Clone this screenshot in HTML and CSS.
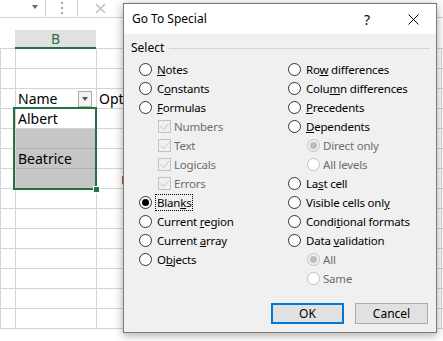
FILE: index.html
```html
<!DOCTYPE html>
<html lang="en">
<head>
    <meta charset="UTF-8">
    <title>Go To Special</title>
    <link rel="stylesheet" href="styles.css">
</head>
<body>
    <div class="page">
        <div class="sheet">
            <div class="formula-bar">
                <div class="name-box"><span class="tri"></span></div>
                <div class="grip"><i></i><i></i><i></i></div>
                <div class="fx-box">
                    <svg width="11" height="11" viewBox="0 0 11 11"><path d="M1 1L10 10M10 1L1 10" stroke="#c4c4c4" stroke-width="1.6"/></svg>
                </div>
            </div>
            <div class="spacer"></div>
            <div class="row heads">
                <div class="cell"></div>
                <div class="cell head-b">B</div>
                <div class="cell"></div>
                <div class="cell"></div>
            </div>
            <div class="row"><div class="cell"></div><div class="cell"></div><div class="cell"></div><div class="cell"></div></div>
            <div class="row"><div class="cell"></div><div class="cell"></div><div class="cell"></div><div class="cell"></div></div>
            <div class="row">
                <div class="cell"></div>
                <div class="cell name-cell">Name<span class="filter"><span class="tri"></span></span></div>
                <div class="cell">Opti</div>
                <div class="cell"></div>
            </div>
            <div class="row"><div class="cell"></div><div class="cell">Albert</div><div class="cell"></div><div class="cell"></div></div>
            <div class="row"><div class="cell"></div><div class="cell blank"></div><div class="cell"></div><div class="cell"></div></div>
            <div class="row"><div class="cell"></div><div class="cell blank">Beatrice</div><div class="cell"></div><div class="cell"></div></div>
            <div class="row"><div class="cell"></div><div class="cell blank"></div><div class="cell"><span class="mark"></span></div><div class="cell"></div></div>
            <div class="row"><div class="cell"></div><div class="cell"></div><div class="cell"></div><div class="cell"></div></div>
            <div class="row"><div class="cell"></div><div class="cell"></div><div class="cell"></div><div class="cell"></div></div>
            <div class="row"><div class="cell"></div><div class="cell"></div><div class="cell"></div><div class="cell"></div></div>
            <div class="row"><div class="cell"></div><div class="cell"></div><div class="cell"></div><div class="cell"></div></div>
            <div class="row"><div class="cell"></div><div class="cell"></div><div class="cell"></div><div class="cell"></div></div>
            <div class="row"><div class="cell"></div><div class="cell"></div><div class="cell"></div><div class="cell"></div></div>
            <div class="row"><div class="cell"></div><div class="cell"></div><div class="cell"></div><div class="cell"></div></div>
            <div class="selection"><span class="handle"></span></div>
        </div>

        <div class="dialog">
            <div class="title-bar">
                <span class="title">Go To Special</span>
                <span class="title-btn help">?</span>
                <span class="title-btn">
                    <svg width="11" height="11" viewBox="0 0 11 11"><path d="M0.5 0.5L10.5 10.5M10.5 0.5L0.5 10.5" stroke="#000" stroke-width="1"/></svg>
                </span>
            </div>
            <div class="dialog-body">
                <div class="group-label"><span>Select</span><span class="rule"></span></div>
                <div class="options">
                    <div class="col">
                        <div class="opt"><span class="radio"></span><span><u>N</u>otes</span></div>
                        <div class="opt"><span class="radio"></span><span>C<u>o</u>nstants</span></div>
                        <div class="opt"><span class="radio"></span><span><u>F</u>ormulas</span></div>
                        <div class="opt sub off"><span class="check"><svg width="11" height="11" viewBox="0 0 11 11"><path d="M1.5 5.5L4.5 8.5L10 2.5" fill="none" stroke="#c2c2c2" stroke-width="1"/></svg></span><span>Numbers</span></div>
                        <div class="opt sub off"><span class="check"><svg width="11" height="11" viewBox="0 0 11 11"><path d="M1.5 5.5L4.5 8.5L10 2.5" fill="none" stroke="#c2c2c2" stroke-width="1"/></svg></span><span>Text</span></div>
                        <div class="opt sub off"><span class="check"><svg width="11" height="11" viewBox="0 0 11 11"><path d="M1.5 5.5L4.5 8.5L10 2.5" fill="none" stroke="#c2c2c2" stroke-width="1"/></svg></span><span>Logicals</span></div>
                        <div class="opt sub off"><span class="check"><svg width="11" height="11" viewBox="0 0 11 11"><path d="M1.5 5.5L4.5 8.5L10 2.5" fill="none" stroke="#c2c2c2" stroke-width="1"/></svg></span><span>Errors</span></div>
                        <div class="opt"><span class="radio on"></span><span class="focus">Blan<u>k</u>s</span></div>
                        <div class="opt"><span class="radio"></span><span>Current <u>r</u>egion</span></div>
                        <div class="opt"><span class="radio"></span><span>Current <u>a</u>rray</span></div>
                        <div class="opt"><span class="radio"></span><span>O<u>b</u>jects</span></div>
                    </div>
                    <div class="col">
                        <div class="opt"><span class="radio"></span><span>Ro<u>w</u> differences</span></div>
                        <div class="opt"><span class="radio"></span><span>Colu<u>m</u>n differences</span></div>
                        <div class="opt"><span class="radio"></span><span><u>P</u>recedents</span></div>
                        <div class="opt"><span class="radio"></span><span><u>D</u>ependents</span></div>
                        <div class="opt sub off"><span class="radio on"></span><span>Direct only</span></div>
                        <div class="opt sub off"><span class="radio"></span><span>All levels</span></div>
                        <div class="opt"><span class="radio"></span><span>La<u>s</u>t cell</span></div>
                        <div class="opt"><span class="radio"></span><span>Visible cells onl<u>y</u></span></div>
                        <div class="opt"><span class="radio"></span><span>Condi<u>t</u>ional formats</span></div>
                        <div class="opt"><span class="radio"></span><span>Data <u>v</u>alidation</span></div>
                        <div class="opt sub off"><span class="radio on"></span><span>All</span></div>
                        <div class="opt sub off"><span class="radio"></span><span>Same</span></div>
                    </div>
                </div>
                <div class="buttons">
                    <button class="btn btn-default">OK</button>
                    <button class="btn">Cancel</button>
                </div>
            </div>
        </div>
    </div>
</body>
</html>
```

FILE: styles.css
```css
* {
    box-sizing: border-box;
}
body {
    margin: 0;
    padding: 0;
    background-color: #fff;
}
.page {
    position: relative;
    width: 443px;
    height: 341px;
    overflow: hidden;
}

/* spreadsheet behind the dialog */
.sheet {
    position: relative;
    height: 341px;
    font-family: "Noto Sans", sans-serif;
    font-size: 14px;
    color: #000;
}
.formula-bar {
    display: flex;
    height: 18px;
    border-bottom: 1px solid #d4d4d4;
}
.name-box {
    width: 46px;
    border-right: 1px solid #d4d4d4;
    position: relative;
}
.name-box .tri {
    position: absolute;
    left: 32px;
    top: 5px;
}
.tri {
    display: block;
    width: 0;
    height: 0;
    border-left: 3.5px solid transparent;
    border-right: 3.5px solid transparent;
    border-top: 4px solid #666;
}
.grip {
    width: 31px;
    display: flex;
    flex-direction: column;
    align-items: center;
    gap: 3px;
    padding-top: 2px;
}
.grip i {
    display: block;
    width: 2px;
    height: 2px;
    background-color: #a0a0a0;
}
.fx-box {
    width: 46px;
    border-left: 1px solid #d4d4d4;
    display: flex;
    align-items: center;
    justify-content: center;
    padding-bottom: 1px;
}
.spacer {
    height: 12px;
}
.row {
    display: grid;
    grid-template-columns: 15px 81px 345px 1fr;
    height: 20px;
    border-left: 1px solid #d4d4d4;
}
.cell {
    border-right: 1px solid #d4d4d4;
    border-bottom: 1px solid #d4d4d4;
    padding-left: 2px;
    line-height: 19px;
    white-space: nowrap;
    overflow: hidden;
}
.row.heads {
    height: 19px;
    border-left: none;
}
.row.heads .cell {
    border-right: none;
    border-bottom: 1px solid #d4d4d4;
}
.row.heads .head-b {
    background-color: #e1e1e1;
    border-bottom: 2px solid #217346;
    color: #217346;
    text-align: center;
    line-height: 17px;
    padding: 0;
}
.name-cell {
    display: flex;
    align-items: center;
    justify-content: space-between;
    padding-right: 4px;
}
.filter {
    width: 14px;
    height: 16px;
    border: 1px solid #ababab;
    background-color: #f3f3f3;
    display: flex;
    align-items: center;
    justify-content: center;
}
.filter .tri {
    border-top-color: #555;
}
.cell.blank {
    background-color: #c6c6c6;
    border-bottom-color: #b0b0b0;
}
.mark {
    display: inline-block;
    width: 4px;
    height: 8px;
    margin-left: 23px;
    background-color: #b25a16;
    vertical-align: middle;
}
.selection {
    position: absolute;
    left: 13px;
    top: 107px;
    width: 84px;
    height: 83px;
    border: 2px solid #217346;
}
.handle {
    position: absolute;
    right: -5px;
    bottom: -5px;
    width: 7px;
    height: 7px;
    background-color: #217346;
    border: 1px solid #fff;
}

/* dialog */
.dialog {
    position: absolute;
    left: 123px;
    top: 3px;
    width: 314px;
    height: 330px;
    border: 1px solid #7a7a7a;
    background-color: #f0f0f0;
    box-shadow: 0 2px 9px rgba(0,0,0,0.35);
    display: flex;
    flex-direction: column;
    font-family: "Noto Sans", sans-serif;
    font-size: 12px;
    color: #000;
}
.title-bar {
    display: flex;
    align-items: center;
    height: 30px;
    background-color: #fff;
    padding-left: 8px;
}
.title {
    flex: 1;
    padding-bottom: 1px;
}
.title-btn {
    width: 46px;
    height: 30px;
    display: flex;
    align-items: center;
    justify-content: center;
}
.help {
    font-size: 14px;
}
.dialog-body {
    flex: 1;
    display: flex;
    flex-direction: column;
    padding: 7px 8px 8px 7px;
}
.group-label {
    display: flex;
    align-items: center;
    height: 14px;
    line-height: 14px;
}
.rule {
    flex: 1;
    height: 1px;
    margin-left: 5px;
    margin-right: -2px;
    background-color: #d5d5d5;
}
.options {
    display: grid;
    grid-template-columns: 149px 1fr;
    padding-left: 8px;
    margin-top: 5px;
    font-size: 11.5px;
    letter-spacing: -0.2px;
}
.opt {
    display: flex;
    align-items: center;
    height: 19px;
    white-space: nowrap;
}
.opt.sub {
    padding-left: 19px;
}
.opt.off {
    color: #6d6d6d;
}
.radio {
    width: 13px;
    height: 13px;
    border: 1px solid #333;
    border-radius: 50%;
    background-color: #fff;
    margin-right: 5px;
    display: flex;
    align-items: center;
    justify-content: center;
    flex-shrink: 0;
}
.radio.on::after {
    content: "";
    width: 7px;
    height: 7px;
    border-radius: 50%;
    background-color: #000;
}
.off .radio {
    border-color: #c2c2c2;
    margin-right: 3px;
}
.off .radio.on {
    background-color: #f0f0f0;
}
.off .radio.on::after {
    background-color: #bcbcbc;
}
.check {
    width: 13px;
    height: 13px;
    border: 1px solid #c2c2c2;
    margin-right: 3px;
    display: flex;
    align-items: center;
    justify-content: center;
}
.focus {
    border: 1px dotted #000;
    padding: 0 1px;
    margin-left: -2px;
    line-height: 15px;
}
.buttons {
    margin-top: auto;
    display: flex;
    justify-content: flex-end;
    gap: 11px;
}
.btn {
    width: 73px;
    height: 21px;
    border: 1px solid #adadad;
    background-color: #e1e1e1;
    font-family: "Noto Sans", sans-serif;
    font-size: 12px;
    color: #000;
    padding: 0;
}
.btn-default {
    border: 2px solid #0078d7;
}
```
